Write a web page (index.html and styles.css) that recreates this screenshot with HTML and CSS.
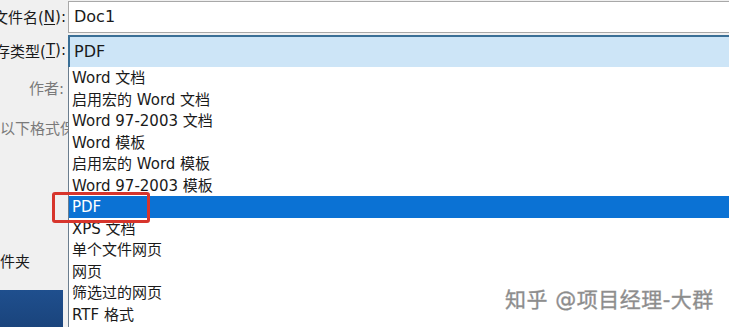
FILE: index.html
```html
<!DOCTYPE html>
<html lang="zh-CN">
<head>
  <meta charset="UTF-8" />
  <title>另存为</title>
  <link rel="stylesheet" href="styles.css">
</head>
<body>
  <div class="dialog">
    <div class="labels">
      <div class="label row-name">文件名(<u>N</u>):</div>
      <div class="label row-type">保存类型(<u>T</u>):</div>
      <div class="label row-author">作者:</div>
      <div class="label row-format">以下格式保存</div>
      <div class="label row-folder">文件夹</div>
      <div class="taskbar"></div>
    </div>

    <div class="fields">
      <div class="input">Doc1</div>
      <div class="select">PDF</div>
    </div>

    <ul class="dropdown">
      <li>Word 文档</li>
      <li>启用宏的 Word 文档</li>
      <li>Word 97-2003 文档</li>
      <li>Word 模板</li>
      <li>启用宏的 Word 模板</li>
      <li>Word 97-2003 模板</li>
      <li class="selected">PDF</li>
      <li>XPS 文档</li>
      <li>单个文件网页</li>
      <li>网页</li>
      <li>筛选过的网页</li>
      <li>RTF 格式</li>
    </ul>

    <div class="marker"></div>
    <div class="watermark">知乎 @项目经理-大群</div>
  </div>
</body>
</html>
```

FILE: styles.css
```css
body {
  margin: 0;
  padding: 0;
  font-family: 'DejaVu Sans', 'Noto Sans CJK SC', sans-serif;
  background-color: #f0f0f0;
  color: #1a1a1a;
  overflow: hidden;
}

.dialog {
  position: relative;
  display: flex;
  width: 729px;
  height: 327px;
  overflow: hidden;
}

.labels {
  width: 66px;
  flex-shrink: 0;
  display: flex;
  flex-direction: column;
  font-size: 15px;
}

.label {
  white-space: nowrap;
  display: flex;
  justify-content: flex-end;
  align-items: center;
}

.label u {
  text-underline-offset: 2px;
}

.row-name {
  height: 33px;
}

.row-type {
  height: 34px;
}

.row-author {
  height: 40px;
  padding-right: 2px;
  color: #7a7a7a;
}

.row-format {
  height: 40px;
  justify-content: flex-start;
  color: #7a7a7a;
}

.row-folder {
  height: 125px;
  box-sizing: border-box;
  padding-top: 105px;
  line-height: 20px;
  align-items: flex-start;
  justify-content: flex-start;
  margin-left: -15px;
}

.taskbar {
  flex: 1;
  margin-top: 18px;
  margin-right: 3px;
  background: linear-gradient(180deg, #1f4f8e, #1a447c);
}

.fields {
  flex: 1;
  display: flex;
  flex-direction: column;
  padding-left: 2px;
}

.input {
  height: 30px;
  margin-top: 1px;
  border: 1px solid #a8a8a8;
  border-right: none;
  background-color: #fff;
  font-size: 16px;
  line-height: 30px;
  padding-left: 5px;
}

.select {
  height: 30px;
  margin-top: 2px;
  border: 2px solid #3a6f96;
  border-right: none;
  border-bottom-color: #2c5878;
  background-color: #cde5f7;
  font-size: 16px;
  line-height: 30px;
  padding-left: 4px;
}

.dropdown {
  position: absolute;
  top: 67px;
  left: 68px;
  right: 0;
  bottom: 0;
  margin: 0;
  padding: 0;
  list-style: none;
  background-color: #fff;
  border-left: 1px solid #6b7d8e;
  font-size: 15px;
}

.dropdown li {
  height: 21.5px;
  box-sizing: border-box;
  padding-top: 2px;
  line-height: 19.5px;
  padding-left: 3px;
  white-space: nowrap;
}

.dropdown li.selected {
  background-color: #0b72d4;
  color: #fff;
}

.marker {
  position: absolute;
  left: 52px;
  top: 192px;
  width: 92px;
  height: 25px;
  border: 3px solid #d7352c;
  border-radius: 3px;
}

.watermark {
  position: absolute;
  left: 505px;
  top: 283px;
  font-size: 21px;
  color: #8a8a8a;
  -webkit-text-stroke: 0.4px #9a9a9a;
  text-shadow: 0 0 2px #fff, 0 0 2px #fff;
  letter-spacing: 0.5px;
}
```
